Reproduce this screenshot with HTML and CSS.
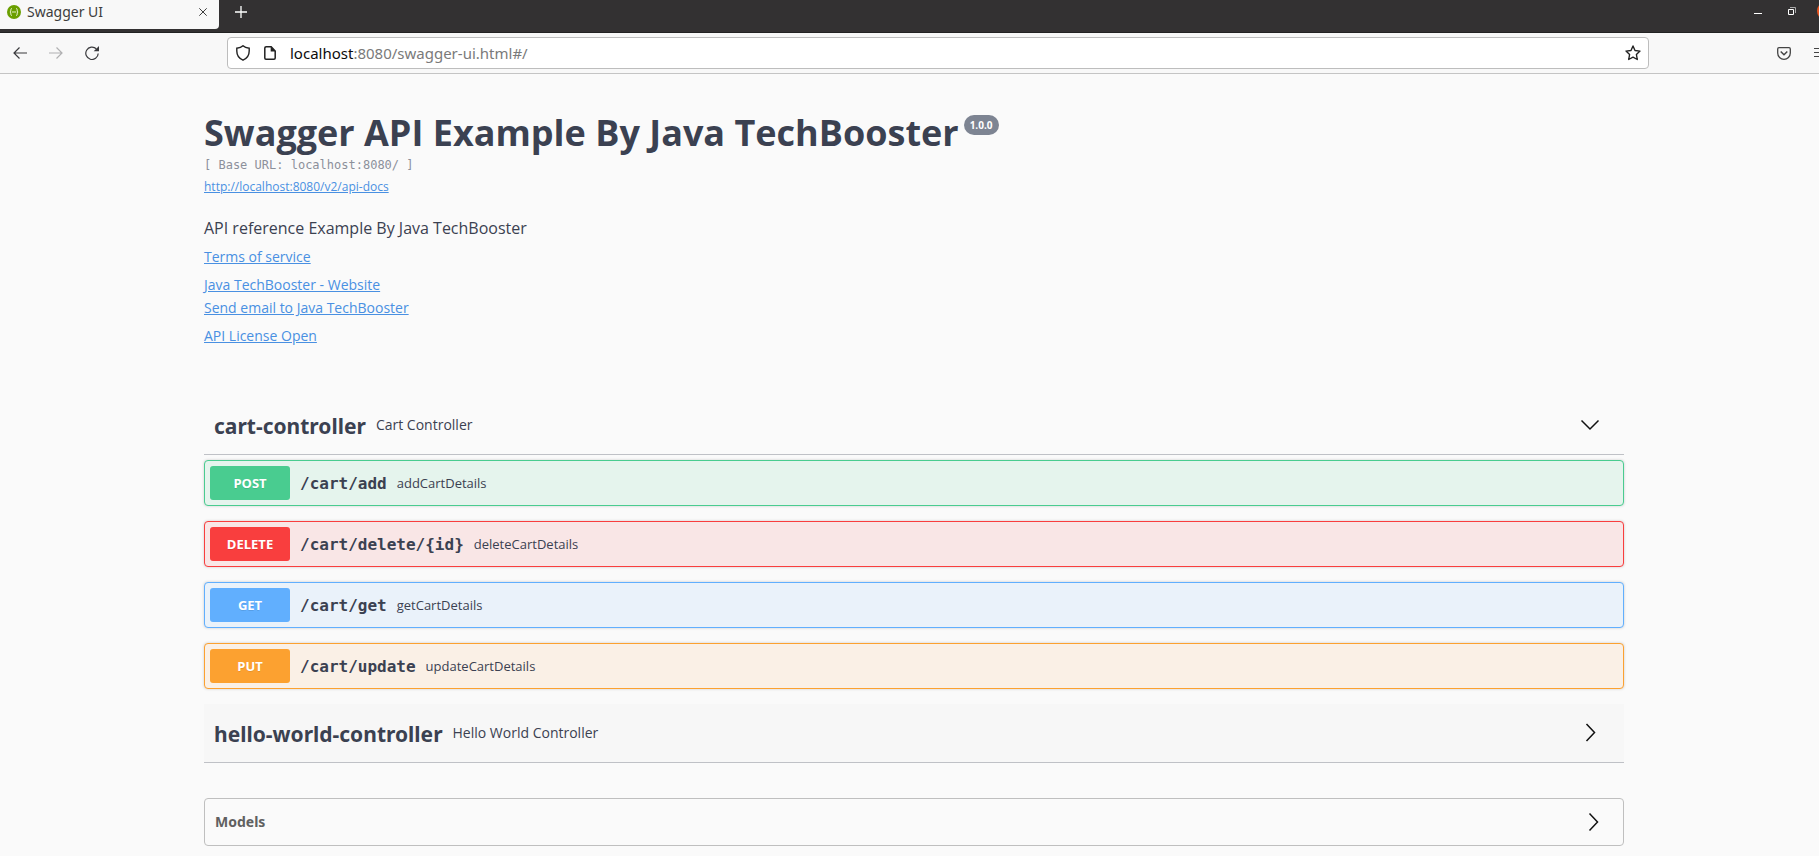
FILE: index.html
```
<!DOCTYPE html>
<html lang="en">
<head>
<meta charset="utf-8">
<title>Swagger UI</title>
<link rel="stylesheet" href="styles.css">
</head>
<body>
<header class="browser">
  <div class="tabstrip">
    <div class="tab">
      <svg class="favicon" width="14" height="14" viewBox="0 0 14 14"><circle cx="7" cy="7" r="7" fill="#6a9f00"/><path d="M5 3.5Q3.8 3.5 3.8 4.8V6L3 7l.8 1v1.2q0 1.3 1.2 1.3M9 3.5q1.2 0 1.2 1.3V6l.8 1-.8 1v1.2q0 1.3-1.2 1.3M4.800 7h4.400" fill="none" stroke="#e4f0c8" stroke-width="1"/></svg>
      <span class="tab-title">Swagger UI</span>
      <button class="icon-btn" aria-label="Close tab"><svg width="8" height="8" viewBox="0 0 8 8"><path d="M.3.3l7.400 7.400M7.700.3l-7.400 7.400" stroke="#3d3d3d" stroke-width="1"/></svg></button>
    </div>
    <button class="icon-btn new-tab" aria-label="New tab"><svg width="12" height="12" viewBox="0 0 12 12"><path d="M6 0v12M0 6h12" stroke="#fff" stroke-width="1.3"/></svg></button>
    <div class="window-controls">
      <button class="icon-btn" aria-label="Minimize"><svg width="8" height="8" viewBox="0 0 8 8"><path d="M0 6.500h8" stroke="#fff"/></svg></button>
      <button class="icon-btn" aria-label="Restore"><svg width="8" height="8" viewBox="0 0 8 8"><path d="M.5 2.500h5v5h-5z" fill="none" stroke="#fff"/><path d="M2 .5h5.500V6" fill="none" stroke="#aaa"/></svg></button>
      <button class="icon-btn" aria-label="Close window"><svg width="18" height="18" viewBox="0 0 18 18"><circle cx="9" cy="9" r="9" fill="#e95420"/></svg></button>
    </div>
  </div>
  <div class="toolbar">
    <div class="nav">
      <button class="icon-btn" aria-label="Back"><svg width="14" height="14" viewBox="0 0 14 14"><path d="M14 7H1M6.500 1.500L1 7l5.500 5.500" fill="none" stroke="#3a3a3d" stroke-width="1.2"/></svg></button>
      <button class="icon-btn" aria-label="Forward" disabled><svg width="14" height="14" viewBox="0 0 14 14"><path d="M0 7H13M7.500 1.500L13 7l-5.500 5.500" fill="none" stroke="#b0b0b2" stroke-width="1.2"/></svg></button>
      <button class="icon-btn" aria-label="Reload"><svg width="14" height="14" viewBox="0 0 14 14"><path d="M13.200 7.500A6.200 6.200 0 1 1 11.300 2.800" fill="none" stroke="#3a3a3d" stroke-width="1.2"/><path d="M14 0v5.300H8.700z" fill="#3a3a3d"/></svg></button>
    </div>
    <div class="urlbar">
      <svg width="14" height="16" viewBox="0 0 14 16"><path d="M7 .8C8.500 2.300 10.600 3 13.200 3.200V6C13.200 10.400 10.600 13.600 7 15.200 3.400 13.600.8 10.400.8 6V3.200C3.400 3 5.500 2.300 7 .8z" fill="none" stroke="#222" stroke-width="1.4"/></svg>
      <svg width="12" height="14" viewBox="0 0 12 14"><path d="M2.200.8h5L11.200 5v7q0 1.200-1.200 1.200H2Q.8 13.200.8 12V2Q.8.8 2.200.8z" fill="none" stroke="#222" stroke-width="1.5"/><path d="M6.700.5V5.500h5z" fill="#222"/></svg>
      <span class="url"><span class="host">localhost</span>:8080/swagger-ui.html#/</span>
      <button class="icon-btn" aria-label="Bookmark"><svg width="16" height="16" viewBox="0 0 16 16"><path d="M8 1l2 4.500 5 .6-3.600 3.400.9 5L8 12.200 3.700 14.500l.9-5L1 6.100l5-.6z" fill="none" stroke="#222" stroke-width="1.400" stroke-linejoin="round"/></svg></button>
    </div>
    <div class="actions">
      <button class="icon-btn" aria-label="Pocket"><svg width="14" height="13" viewBox="0 0 14 13"><path d="M2 .7h10q1.300 0 1.300 1.300v4a6.300 6.300 0 0 1-12.600 0V2Q.7.7 2 .7z" fill="none" stroke="#444" stroke-width="1.300"/><path d="M3.700 4.500L7 7.700l3.300-3.200" fill="none" stroke="#444" stroke-width="1.500"/></svg></button>
      <button class="icon-btn" aria-label="Menu"><svg width="14" height="12" viewBox="0 0 14 12"><path d="M0 1.500h14M0 5.500h14M0 9.500h14" stroke="#444" stroke-width="1.200"/></svg></button>
    </div>
  </div>
</header>
<main class="page">
  <div class="wrapper">
    <section class="info">
      <div class="heading"><h1>Swagger API Example By Java TechBooster</h1><span class="version">1.0.0</span></div>
      <div class="base-url">[ Base URL: localhost:8080/ ]</div>
      <a class="docs-link" href="#docs">http://localhost:8080/v2/api-docs</a>
      <p class="description">API reference Example By Java TechBooster</p>
      <div class="links">
        <a href="#terms">Terms of service</a>
        <div class="contact"><a href="#website">Java TechBooster - Website</a><a href="#email">Send email to Java TechBooster</a></div>
        <a href="#license">API License Open</a>
      </div>
    </section>
    <section>
      <div class="tag">
        <h2>cart-controller</h2><span class="tag-desc">Cart Controller</span>
        <button class="icon-btn" aria-label="Collapse cart-controller"><svg width="20" height="20" viewBox="0 0 20 20"><path d="M1.500 5.500l8.500 8.500 8.500-8.500" fill="none" stroke="#111" stroke-width="1.500"/></svg></button>
      </div>
      <div class="operations">
        <button class="op post"><span class="method">POST</span><span class="path">/cart/add</span><span class="summary">addCartDetails</span></button>
        <button class="op delete"><span class="method">DELETE</span><span class="path">/cart/delete/{id}</span><span class="summary">deleteCartDetails</span></button>
        <button class="op get"><span class="method">GET</span><span class="path">/cart/get</span><span class="summary">getCartDetails</span></button>
        <button class="op put"><span class="method">PUT</span><span class="path">/cart/update</span><span class="summary">updateCartDetails</span></button>
      </div>
    </section>
    <section>
      <div class="tag shaded">
        <h2>hello-world-controller</h2><span class="tag-desc">Hello World Controller</span>
        <button class="icon-btn" aria-label="Expand hello-world-controller"><svg width="20" height="20" viewBox="0 0 20 20"><path d="M6.500 1l8 8.500-8 8.500" fill="none" stroke="#111" stroke-width="1.500"/></svg></button>
      </div>
    </section>
    <section class="models">
      <h3>Models</h3>
      <button class="icon-btn" aria-label="Expand models"><svg width="20" height="20" viewBox="0 0 20 20"><path d="M6.500 1.500l8 8.500-8 8.500" fill="none" stroke="#111" stroke-width="1.500"/></svg></button>
    </section>
  </div>
</main>
</body>
</html>
```
FILE: styles.css
```
* { box-sizing: border-box; }

body {
  margin: 0;
  background: #fafafa;
  color: #3b4151;
  font-family: "Open Sans", sans-serif;
  overflow-x: hidden;
}

h1, h2, h3, p { margin: 0; }
svg { display: block; flex: none; }

button {
  margin: 0;
  padding: 0;
  border: 0;
  background: none;
  color: inherit;
  font-family: inherit;
  cursor: pointer;
}

.icon-btn { flex: none; }

/* Browser chrome */
.browser { font-family: "Noto Sans", sans-serif; overflow: hidden; }

.tabstrip {
  display: flex;
  align-items: flex-start;
  height: 33px;
  background: #333132;
  border-bottom: 1px solid #222;
}

.tab {
  display: flex;
  align-items: center;
  gap: 6px;
  width: 219px;
  height: 29px;
  padding: 0 12px 6px 7px;
  background: #f8f8f8;
  border-radius: 0 0 4px 0;
}

.tab-title { flex: 1; font-size: 14px; line-height: 20px; color: #3d3d3d; }
.new-tab { margin: 6px 0 0 16px; }

.window-controls {
  display: flex;
  align-items: center;
  gap: 26px;
  height: 22px;
  margin: 0 -16px 0 auto;
}
.window-controls .icon-btn:last-child { margin-left: -5px; }

.toolbar {
  display: flex;
  align-items: center;
  height: 41px;
  background: #f8f8f8;
  border-bottom: 1px solid #c4c4c4;
}

.nav { display: flex; gap: 22px; width: 227px; padding-left: 13px; }
.nav .icon-btn { width: 14px; }

.urlbar {
  display: flex;
  align-items: center;
  flex: 1;
  height: 32px;
  gap: 14px;
  padding: 0 7px 0 8px;
  background: #fff;
  border: 1px solid #bdbdbd;
  border-radius: 4px;
}

.url { flex: 1; font-size: 15px; line-height: 20px; color: #7a7a7a; }
.host { color: #0c0c0d; }

.actions { display: flex; align-items: center; gap: 23px; margin: 0 -9px 0 128px; }

/* API documentation */
.page { padding: 34px 0 10px 9px; }
.wrapper { max-width: 1460px; margin: 0 auto; padding: 0 20px; }

.info { display: flex; flex-direction: column; align-items: flex-start; margin-bottom: 50px; }
.info a { color: #4990e2; }

.heading { display: flex; align-items: flex-start; gap: 5px; }
.heading h1 { font-size: 36px; line-height: 49px; }

.version {
  margin-top: 7px;
  padding: 0 6px;
  border-radius: 10px;
  background: #7d8492;
  color: #fff;
  font-size: 10px;
  font-weight: 700;
  line-height: 20px;
}

.base-url {
  color: #8c909a;
  font-family: "DejaVu Sans Mono", monospace;
  font-size: 12px;
  line-height: 17px;
}

.docs-link { margin-top: 4px; font-size: 12px; line-height: 18px; }
.description { margin-top: 20px; font-size: 16px; line-height: 24px; }

.links {
  display: flex;
  flex-direction: column;
  align-items: flex-start;
  gap: 8px;
  margin-top: 7px;
  font-size: 14px;
  line-height: 20px;
}
.contact { display: flex; flex-direction: column; align-items: flex-start; gap: 3px; }

.tag {
  display: flex;
  align-items: center;
  gap: 10px;
  height: 59px;
  padding: 0 24px 0 10px;
  border-bottom: 1px solid #bfc1c6;
}
.tag.shaded { background: #f7f7f7; }
.tag h2 { padding-top: 2px; font-family: "Noto Sans", sans-serif; font-size: 21px; line-height: 32px; }
.tag-desc { flex: 1; font-size: 14px; line-height: 20px; }

.operations { display: flex; flex-direction: column; gap: 15px; padding: 5px 0 15px; }

.op {
  display: flex;
  align-items: center;
  gap: 10px;
  padding: 5px;
  border: 1px solid;
  border-radius: 4px;
  box-shadow: 0 0 3px rgba(0, 0, 0, 0.19);
  text-align: left;
}

.method {
  width: 80px;
  border-radius: 3px;
  color: #fff;
  font-size: 13px;
  font-weight: 700;
  line-height: 34px;
  text-align: center;
  text-shadow: 0 1px 0 rgba(0, 0, 0, 0.1);
}

.path {
  padding-top: 2px;
  color: #3b4151;
  font-family: "DejaVu Sans Mono", monospace;
  font-size: 16px;
  font-weight: 700;
  line-height: 20px;
}
.summary { color: #3b4151; font-size: 13px; line-height: 20px; }

.op.post { border-color: #49cc90; background: #e5f4ed; }
.post .method { background: #49cc90; }
.op.delete { border-color: #f93e3e; background: #f9e6e6; }
.delete .method { background: #f93e3e; }
.op.get { border-color: #61affe; background: #eaf2fa; }
.get .method { background: #61affe; }
.op.put { border-color: #fca130; background: #faf0e6; }
.put .method { background: #fca130; }

.models {
  display: flex;
  align-items: center;
  justify-content: space-between;
  height: 48px;
  margin-top: 35px;
  padding: 0 20px 0 10px;
  border: 1px solid #bfbfbf;
  border-radius: 4px;
}
.models h3 { color: #606060; font-family: "Noto Sans", sans-serif; font-size: 14px; line-height: 24px; }
```
